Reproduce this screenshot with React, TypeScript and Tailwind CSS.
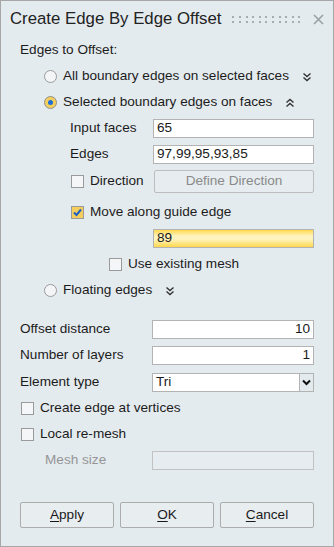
import React from "react";

const font = { fontFamily: '"Liberation Sans", Arial, sans-serif' };

function Radio({ checked }: { checked?: boolean }) {
  return (
    <span
      className={
        "flex h-[13px] w-[13px] shrink-0 items-center justify-center rounded-full border " +
        (checked ? "border-[#8f8f8f] bg-[#f4cf5d]" : "border-[#9a9a9a] bg-[#f3f5f6]")
      }
    >
      {checked && <span className="h-[5px] w-[5px] rounded-full bg-[#1f6fd6]" />}
    </span>
  );
}

function Check({ checked, disabled }: { checked?: boolean; disabled?: boolean }) {
  return (
    <span
      className={
        "flex h-[13px] w-[13px] shrink-0 items-center justify-center border " +
        (checked ? "border-[#9a9a9a] bg-[#f4cf5d]" : "border-[#9a9a9a] bg-[#f4f6f7]") +
        (disabled ? " opacity-60" : "")
      }
    >
      {checked && (
        <svg width="11" height="11" viewBox="0 0 11 11">
          <path d="M2 5.5 L4.5 8 L9 2.5" fill="none" stroke="#1d5fc4" strokeWidth="2" />
        </svg>
      )}
    </span>
  );
}

function ChevDown() {
  return (
    <svg width="10" height="10" viewBox="0 0 10 10">
      <path d="M1.5 1.5 L5 4.5 L8.5 1.5 M1.5 5.5 L5 8.5 L8.5 5.5" fill="none" stroke="#333" strokeWidth="1.4" />
    </svg>
  );
}

function ChevUp() {
  return (
    <svg width="10" height="10" viewBox="0 0 10 10">
      <path d="M1.5 4.5 L5 1.5 L8.5 4.5 M1.5 8.5 L5 5.5 L8.5 8.5" fill="none" stroke="#333" strokeWidth="1.4" />
    </svg>
  );
}

function Field({ value, right, className = "" }: { value?: string; right?: boolean; className?: string }) {
  return (
    <div
      className={
        "flex h-[19px] items-center border border-[#b3b3b3] bg-white px-[3px] text-[#1a1a1a] " +
        (right ? "justify-end " : "") +
        className
      }
    >
      {value}
    </div>
  );
}

function Btn({ u, rest }: { u: string; rest: string }) {
  return (
    <div className="flex h-[26px] flex-1 items-center justify-center rounded-[2px] border border-[#acacac] bg-[#e8edf0] text-[#1a1a1a]">
      <span>
        <span className="underline underline-offset-2">{u}</span>
        {rest}
      </span>
    </div>
  );
}

export default function App() {
  return (
    <div
      style={font}
      className="flex h-[547px] w-[334px] flex-col border border-[#a7a7a7] bg-[#e4ebef] text-[13.6px] text-[#1c1c1c]"
    >
      {/* Title bar */}
      <div className="flex h-[36px] items-center pl-[9px] pr-[9px]">
        <span className="text-[16.8px] text-[#222]">Create Edge By Edge Offset</span>
        <div className="ml-[11px] grid grid-cols-[repeat(11,3px)] gap-x-[3.6px] gap-y-[3px]">
          {Array.from({ length: 22 }).map((_, i) => (
            <span key={i} className="h-[2px] w-[2px] bg-[#a6adb2]" />
          ))}
        </div>
        <svg className="ml-auto" width="11" height="11" viewBox="0 0 11 11">
          <path d="M1 1 L10 10 M10 1 L1 10" stroke="#9aa0a4" strokeWidth="1.6" />
        </svg>
      </div>

      <div className="mt-[1px] flex h-[24px] items-center pl-[19px]">Edges to Offset:</div>

      <div className="mt-[1px] flex h-[26px] items-center pl-[43px]">
        <Radio />
        <span className="ml-[6px]">All boundary edges on selected faces</span>
        <span className="ml-[13px] mt-[1px]">
          <ChevDown />
        </span>
      </div>
      <div className="flex h-[26px] items-center pl-[43px]">
        <Radio checked />
        <span className="ml-[6px]">Selected boundary edges on faces</span>
        <span className="ml-[13px] mt-[1px]">
          <ChevUp />
        </span>
      </div>

      <div className="flex h-[26px] items-center pl-[69px] pr-[19px]">
        <span className="w-[83px]">Input faces</span>
        <Field value="65" className="flex-1" />
      </div>
      <div className="flex h-[26px] items-center pl-[69px] pr-[19px]">
        <span className="w-[83px]">Edges</span>
        <Field value="97,99,95,93,85" className="flex-1" />
      </div>
      <div className="flex h-[28px] items-center pl-[70px] pr-[19px]">
        <Check />
        <span className="ml-[6px] w-[64px]">Direction</span>
        <div className="flex h-[23px] flex-1 items-center justify-center rounded-[2px] border border-[#bdbdbd] bg-[#e6ecef] text-[#8a8a8a]">
          Define Direction
        </div>
      </div>
      <div className="mt-[4px] flex h-[26px] items-center pl-[70px]">
        <Check checked />
        <span className="ml-[6px]">Move along guide edge</span>
      </div>
      <div className="flex h-[26px] items-center pl-[152px] pr-[19px]">
        <div className="flex h-[19px] flex-1 items-center border border-[#b3b3b3] bg-[linear-gradient(to_bottom,#ffd84c_0%,#fff3bd_35%,#fff3bd_55%,#ffd84c_100%)] px-[3px] text-[#1a1a1a]">
          89
        </div>
      </div>
      <div className="flex h-[26px] items-center pl-[108px]">
        <Check />
        <span className="ml-[6px]">Use existing mesh</span>
      </div>
      <div className="flex h-[27px] items-center pl-[43px]">
        <Radio />
        <span className="ml-[6px]">Floating edges</span>
        <span className="ml-[13px] mt-[1px]">
          <ChevDown />
        </span>
      </div>

      <div className="mt-[12px] flex h-[26px] items-center pl-[19px] pr-[19px]">
        <span className="w-[132px]">Offset distance</span>
        <Field value="10" right className="flex-1" />
      </div>
      <div className="flex h-[26px] items-center pl-[19px] pr-[19px]">
        <span className="w-[132px]">Number of layers</span>
        <Field value="1" right className="flex-1" />
      </div>
      <div className="mt-[1px] flex h-[26px] items-center pl-[19px] pr-[19px]">
        <span className="w-[132px]">Element type</span>
        <div className="flex h-[19px] flex-1 border border-[#b3b3b3] bg-white">
          <span className="flex flex-1 items-center px-[3px]">Tri</span>
          <span className="flex w-[14px] items-center justify-center border-l border-[#b3b3b3] bg-[#e4ebef]">
            <svg width="9" height="7" viewBox="0 0 9 7">
              <path d="M1 1.5 L4.5 5 L8 1.5" fill="none" stroke="#111" strokeWidth="2" />
            </svg>
          </span>
        </div>
      </div>
      <div className="flex h-[26px] items-center pl-[20px]">
        <Check />
        <span className="ml-[6px]">Create edge at vertices</span>
      </div>
      <div className="flex h-[26px] items-center pl-[20px]">
        <Check />
        <span className="ml-[6px]">Local re-mesh</span>
      </div>
      <div className="flex h-[26px] items-center pl-[44px] pr-[19px]">
        <span className="w-[107px] text-[#959595]">Mesh size</span>
        <div className="h-[19px] flex-1 border border-[#c2c2c2] bg-[#e6ecef]" />
      </div>

      <div className="mt-[29px] flex gap-[6px] px-[19px]">
        <Btn u="A" rest="pply" />
        <Btn u="O" rest="K" />
        <Btn u="C" rest="ancel" />
      </div>
    </div>
  );
}
